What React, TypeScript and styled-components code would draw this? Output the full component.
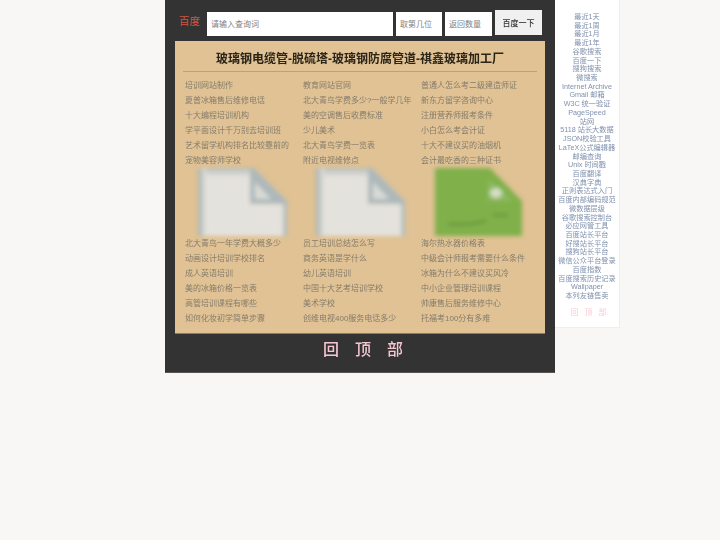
import React from 'react'
import styled, { createGlobalStyle } from 'styled-components'

const GlobalStyle = createGlobalStyle`
  html, body {
    margin: 0;
    padding: 0;
    background: #f8f7f5;
    font-family: "Liberation Sans", "Noto Sans CJK SC", sans-serif;
  }
`

const Page = styled.div`
  width: 720px;
  height: 540px;
  display: flex;
  align-items: flex-start;
  padding-left: 165px;
  box-sizing: border-box;
  overflow: hidden;
  filter: blur(0.3px);
`

const Main = styled.main`
  width: 390px;
  height: 373px;
  background: #333333;
  border-bottom: 1px solid #555;
  box-sizing: border-box;
  padding: 10px 10px 0;
`

const SearchBar = styled.form`
  display: flex;
  align-items: flex-start;
  height: 31px;
`

const BrandLabel = styled.span`
  width: 32px;
  margin-top: 4px;
  padding-left: 4px;
  box-sizing: border-box;
  font-size: 10.5px;
  line-height: 14px;
  color: #d0533f;
`

const Field = styled.input<{ $width: number }>`
  width: ${(p) => p.$width}px;
  height: 24px;
  margin: 2px 3px 0 0;
  padding: 0 3px 0 4px;
  box-sizing: border-box;
  border: 0;
  outline: none;
  background: #ffffff;
  caret-color: #333;
  font-family: inherit;
  font-size: 8px;
  &::placeholder {
    color: #808080;
    opacity: 1;
  }
`

const SearchButton = styled.button`
  width: 47px;
  height: 25px;
  padding: 0;
  border: 0;
  background: #f0f0f0;
  color: #333;
  font-family: inherit;
  font-size: 8px;
  font-weight: 500;
`

const Panel = styled.section`
  height: 293px;
  background: #e0c294;
  border-bottom: 1px solid #8f7a5c;
  box-sizing: border-box;
  padding: 0 8px;
`

const Title = styled.h1`
  margin: 0;
  height: 30px;
  border-bottom: 1px solid #b9a284;
  font-size: 12px;
  line-height: 36px;
  font-weight: bold;
  text-align: center;
  color: #2b2418;
`

const Columns = styled.div`
  display: grid;
  grid-template-columns: repeat(3, 118px);
  padding: 6px 0 0 2px;
`

const Column = styled.div`
  display: flex;
  flex-direction: column;
`

const LinkItem = styled.a`
  height: 15px;
  font-size: 8px;
  line-height: 15px;
  white-space: nowrap;
  color: #857c6c;
`

const Thumb = styled.svg`
  display: block;
  width: 89px;
  height: 68px;
  margin-left: 13px;
  overflow: visible;
`

const BackTop = styled.div`
  margin-top: 6px;
  text-align: center;
  font-size: 16px;
  line-height: 20px;
  font-weight: 500;
  letter-spacing: 16px;
  padding-left: 22px;
  color: #f6c6d0;
`

const Sidebar = styled.aside`
  width: 65px;
  height: 328px;
  background: #ffffff;
  box-sizing: border-box;
  padding-top: 13px;
  border-right: 1px solid #eeeeee;
  border-bottom: 1px solid #eeeeee;
  text-align: center;
`

const SideLink = styled.a`
  display: block;
  font-size: 7.2px;
  line-height: 8.72px;
  white-space: nowrap;
  color: #7f90ad;
`

const SideTop = styled.div`
  margin-top: 7px;
  font-size: 8px;
  line-height: 9px;
  letter-spacing: 6px;
  padding-left: 9px;
  color: #fbccd5;
`

const FileIcon: React.FC<{ green?: boolean; id: string }> = ({ green, id }) => (
  <Thumb viewBox="0 0 89 68">
    <defs>
      <filter id={id} x="-10%" y="-10%" width="120%" height="120%">
        <feGaussianBlur stdDeviation="2" />
      </filter>
      <linearGradient id={`${id}-left`} x1="0" x2="1" y1="0" y2="0">
        <stop offset="0" stopColor="#a3afb2" />
        <stop offset="1" stopColor="#e4e2dc" />
      </linearGradient>
      <linearGradient id={`${id}-top`} x1="0" x2="0" y1="0" y2="1">
        <stop offset="0" stopColor="#b3bcbd" />
        <stop offset="1" stopColor="#e4e2dc" />
      </linearGradient>
    </defs>
    {green ? (
      <g filter={`url(#${id})`}>
        <path d="M1 0H56L88 33V68H1Z" fill="#7fb04a" />
        <path d="M54 12L68 22L78 33H54Z" fill="#8fb962" />
        <ellipse cx="62" cy="25" rx="6" ry="5" fill="#d6dfc4" />
        <path d="M14 56C26 57 40 56 52 53" stroke="#618f3b" strokeWidth="2" fill="none" />
        <path d="M59 47H74" stroke="#618f3b" strokeWidth="2" fill="none" />
      </g>
    ) : (
      <g filter={`url(#${id})`}>
        <path d="M0 0H56L89 33V68H0Z" fill="#e4e2dc" />
        <rect x="0" y="0" width="56" height="9" fill={`url(#${id}-top)`} />
        <rect x="0" y="0" width="8" height="68" fill={`url(#${id}-left)`} />
        <path d="M85 33H89V68H85Z" fill="#b3bdbf" />
        <path d="M52 0H56L89 33V36H52Z" fill="#adb8ba" />
        <path d="M57 14L73 31H57Z" fill="#d9dad6" />
      </g>
    )}
  </Thumb>
)

const columns = [
  {
    id: 'thumb-a',
    top: ['培训网站制作', '夏普冰箱售后维修电话', '十大编程培训机构', '学平面设计千万别去培训班', '艺术留学机构排名比较靠前的', '宠物美容师学校'],
    bottom: ['北大青鸟一年学费大概多少', '动画设计培训学校排名', '成人英语培训', '美的冰箱价格一览表', '高管培训课程有哪些', '如何化妆初学简单步骤'],
  },
  {
    id: 'thumb-b',
    top: ['教育网站官网', '北大青鸟学费多少?一般学几年', '美的空调售后收费标准', '少儿美术', '北大青鸟学费一览表', '附近电视维修点'],
    bottom: ['员工培训总结怎么写', '商务英语是学什么', '幼儿英语培训', '中国十大艺考培训学校', '美术学校', '创维电视400服务电话多少'],
  },
  {
    id: 'thumb-c',
    top: ['普通人怎么考二级建造师证', '新东方留学咨询中心', '注册营养师报考条件', '小白怎么考会计证', '十大不建议买的油烟机', '会计最吃香的三种证书'],
    bottom: ['海尔热水器价格表', '中级会计师报考需要什么条件', '冰箱为什么不建议买风冷', '中小企业管理培训课程', '帅康售后服务维修中心', '托福考100分有多难'],
    green: true,
  },
]

const sideLinks = [
  '最近1天', '最近1周', '最近1月', '最近1年', '谷歌搜索', '百度一下', '搜狗搜索', '微搜索',
  'Internet Archive', 'Gmail 邮箱', 'W3C 统一验证', 'PageSpeed', '站网', '5118 站长大数据',
  'JSON校验工具', 'LaTeX公式编辑器', '邮编查询', 'Unix 时间戳', '百度翻译', '汉典字典',
  '正则表达式入门', '百度内部编码规范', '微数据层级', '谷歌搜索控制台', '必应网管工具',
  '百度站长平台', '好搜站长平台', '搜狗站长平台', '微信公众平台登录', '百度指数',
  '百度搜索历史记录', 'Wallpaper', '本列友链售卖',
]

const App: React.FC = () => (
  <Page>
    <GlobalStyle />
    <Main>
      <SearchBar>
        <BrandLabel>百度</BrandLabel>
        <Field $width={186} placeholder="请输入查询词" autoFocus />
        <Field $width={46} placeholder="取第几位" />
        <Field $width={47} placeholder="返回数量" />
        <SearchButton type="button">百度一下</SearchButton>
      </SearchBar>
      <Panel>
        <Title>玻璃钢电缆管-脱硫塔-玻璃钢防腐管道-祺鑫玻璃加工厂</Title>
        <Columns>
          {columns.map((col) => (
            <Column key={col.id}>
              {col.top.map((text) => (
                <LinkItem key={text}>{text}</LinkItem>
              ))}
              <FileIcon green={col.green} id={col.id} />
              {col.bottom.map((text) => (
                <LinkItem key={text}>{text}</LinkItem>
              ))}
            </Column>
          ))}
        </Columns>
      </Panel>
      <BackTop>回顶部</BackTop>
    </Main>
    <Sidebar>
      {sideLinks.map((text) => (
        <SideLink key={text}>{text}</SideLink>
      ))}
      <SideTop>回顶部</SideTop>
    </Sidebar>
  </Page>
)

export default App
